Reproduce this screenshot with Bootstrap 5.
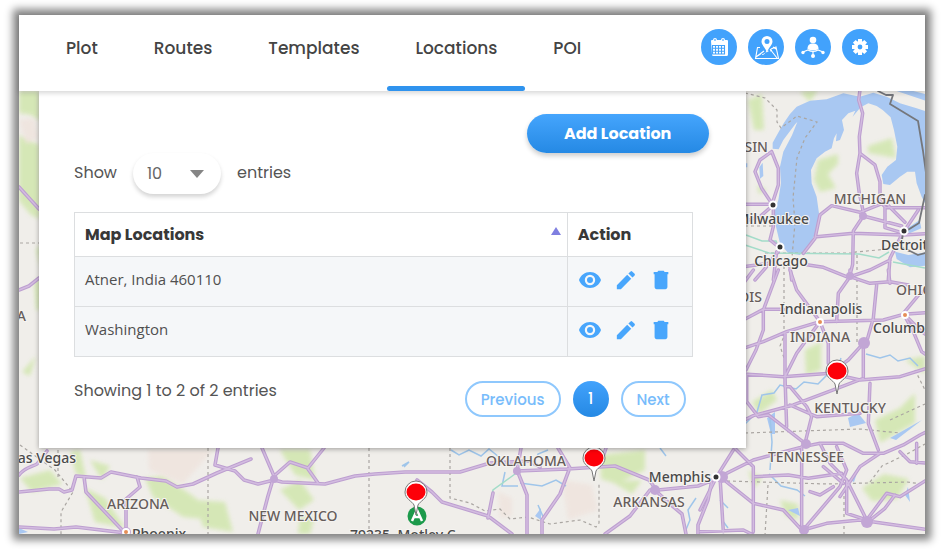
<!DOCTYPE html>
<html lang="en">
<head>
<meta charset="utf-8">
<meta name="viewport" content="width=device-width, initial-scale=1">
<title>Locations</title>
<link href="https://cdn.jsdelivr.net/npm/bootstrap@5.3.0/dist/css/bootstrap.min.css" rel="stylesheet">
<style>
:root { --ui: Poppins, Inter, "Open Sans", sans-serif; --blue: #42a2fc; }
body { font-family: var(--ui); font-size: 15px; color: #444; background: #fff; padding: 15px 19px; }
.app-window { background: #fff; box-shadow: 0 0 8px 6px #858585; }
.top-bar { z-index: 2; min-height: 76px; padding: 0 47px 0 19px; box-shadow: 0 2px 5px rgba(0,0,0,.17); }
.tabs .nav-link { position: relative; height: 76px; padding: 21px 28px 0; font-size: 17px; line-height: 24px; font-weight: 500; color: #444; }
.tabs .nav-link.active::after { content: ""; position: absolute; left: 0; right: 0; bottom: 0; height: 5px; border-radius: 3px; background: #2f93ee; }
.tools { gap: 11px; padding-top: 14px; }
.tool { width: 36px; height: 36px; border: 0; padding: 0; background: var(--blue); color: #fff; border-radius: 50%; }
.map-area { isolation: isolate; }
.map-svg { inset: 0; z-index: -1; background: #f0eeea; }
.map-svg text { font-family: "Noto Sans", sans-serif; font-size: 14px; font-weight: 500; fill: #665d5b; stroke: #f6f4f1; stroke-width: 2px; paint-order: stroke; }
.map-svg .city { fill: #4a4a4a; }
.panel { width: 78%; margin-left: 20px; padding: 23px 37px 31px 35px; background: #fff; box-shadow: 0 1px 5px rgba(0,0,0,.35); }
.btn-add { width: 182px; height: 39px; border: 0; border-radius: 20px; font-size: 16px; font-weight: 700; color: #fff; background: linear-gradient(#45a5fd, #2589e4); box-shadow: 0 3px 5px rgba(0,0,0,.2); }
.length { gap: 16px; font-size: 16px; line-height: 40px; color: #555; margin-bottom: 18px; }
.picker::after { content: ""; position: absolute; right: 17px; top: 17px; border: 7px solid transparent; border-top: 8px solid #858585; border-bottom: 0; pointer-events: none; }
.picker select { appearance: none; width: 88px; height: 41px; padding: 0 14px; border: 0; border-radius: 21px; background: #fff; color: #666; font-size: 16px; box-shadow: 0 3px 4px rgba(0,0,0,.17); }
.places { border: 1px solid #dfe1e2; margin-bottom: 24px; }
.places th, .places td { border: 1px solid #dcdee0; padding: 0 10px; box-shadow: none; vertical-align: middle; }
.places th { height: 44px; font-size: 16px; font-weight: 700; color: #383838; }
.places td { height: 50px; padding-bottom: 4px; background: #f5f7f9; font-family: "Open Sans", sans-serif; font-size: 15px; color: #505050; }
.sort { border: 5px solid transparent; border-bottom: 8px solid #7f7fe0; border-top: 0; margin: 0 -4px 8px 0; }
.col-act { width: 125px; }
.acts { gap: 13px; }
.acts button { border: 0; padding: 0; background: none; color: #48a6fc; line-height: 1; }
.status { font-size: 16px; line-height: 20px; color: #555; }
.pager { gap: 13px; padding-right: 7px; }
.pager .page-item .page-link { height: 36px; padding: 0 14px; border: 2px solid #8fc8fd; border-radius: 18px; line-height: 33px; font-size: 15px; font-weight: 500; color: #78bcfb; }
.pager .page-item.active .page-link { width: 36px; padding: 0; border: 0; line-height: 35px; text-align: center; color: #fff; background: linear-gradient(#42a2fc, #2589e4); }
</style>
<script src="https://cdn.jsdelivr.net/npm/bootstrap@5.3.0/dist/js/bootstrap.bundle.min.js"></script>
</head>
<body class="min-vh-100 d-flex flex-column">
<div class="app-window flex-grow-1 d-flex flex-column">
  <header class="top-bar bg-white position-relative d-flex justify-content-between align-items-start">
    <nav class="nav tabs flex-nowrap" aria-label="Main">
      <a class="nav-link" href="#plot">Plot</a>
      <a class="nav-link" href="#routes">Routes</a>
      <a class="nav-link" href="#templates">Templates</a>
      <a class="nav-link active" aria-current="page" href="#locations">Locations</a>
      <a class="nav-link" href="#poi">POI</a>
    </nav>
    <div class="tools d-flex">
      <button class="tool" type="button" aria-label="Calendar"><svg width="36" height="36" viewBox="0 0 36 36"><path fill="currentColor" d="M10 12q0-1 1-1h1q0-2 2-2t2 2h4q0-2 2-2t2 2h2q1 0 1 1v13.500q0 1.500-1.500 1.500h-13q-1.500 0-1.500-1.500z"/><path stroke="#42a2fc" stroke-width="1.100" fill="none" d="M11.500 16.500h12v8.500h-12zM11.500 19.300h12M11.500 22.200h12M14.500 16.500v8.500M17.500 16.500v8.500M20.500 16.500v8.500M14 10v2M22 10v2"/></svg></button>
      <button class="tool" type="button" aria-label="Map"><svg width="36" height="36" viewBox="0 0 36 36" fill="none" stroke="#fff"><path d="M12 18.500H9.500L7.500 29.500h23L28 18l-5 2M25 18l3 2M8 28l8-6M22 20l7 9" stroke-width="1.100"/><path d="M10 27c2-3 5 0 7-3s5-1 7-3" stroke-dasharray="3 1.500"/><path fill="#fff" stroke="none" fill-rule="evenodd" d="M19 7a5.500 5.500 0 0 1 5.500 5.500c0 3.500-4 6-5.500 11-1.500-5-5.500-7.500-5.500-11A5.500 5.500 0 0 1 19 7zm0 3a2.500 2.500 0 1 0 0 5 2.500 2.500 0 0 0 0-5z"/></svg></button>
      <button class="tool" type="button" aria-label="Drivers"><svg width="36" height="36" viewBox="0 0 36 36" fill="#fff"><circle cx="18" cy="11" r="3.300"/><path d="M12.500 20c0-4 2-5.500 5.500-5.500s5.500 1.500 5.500 5.500q-5.500 3-11 0z"/><path fill="none" stroke="#fff" stroke-width="1.200" d="M8 23l5-2q5 3 10 0l5 2M18 22v4"/><circle cx="8" cy="23.500" r="1.700"/><circle cx="28" cy="23.500" r="1.700"/><circle cx="18" cy="27" r="2"/></svg></button>
      <button class="tool" type="button" aria-label="Settings"><svg width="36" height="36" viewBox="0 0 36 36"><circle cx="18" cy="18" r="4.200" fill="none" stroke="#fff" stroke-width="3.600"/><g stroke="#fff" stroke-width="4"><path d="M18 10v3M18 23v3M10 18h3M23 18h3M12.300 12.300l2.200 2.200M21.500 21.500l2.200 2.200M12.300 23.700l2.200-2.200M21.500 14.500l2.200-2.200"/></g></svg></button>
    </div>
  </header>

  <main class="map-area position-relative flex-grow-1 overflow-hidden">
    <svg class="map-svg position-absolute w-100 h-100" viewBox="19 91 906 443" preserveAspectRatio="xMidYMid slice" role="img" aria-label="Map of the central United States">
      <defs>
        <filter id="soft" x="-20%" y="-20%" width="140%" height="140%"><feGaussianBlur stdDeviation="2"/></filter>
        <g id="pin"><path d="M-2 13C-4 9-11 7-11 0a11 11 0 0 1 22 0c0 7-7 9-9 13L0 23z" fill="#fff" stroke="#777"/><ellipse rx="9.500" ry="8.500" fill="#fd0009"/></g>
        <!-- roads of the Great Lakes, units of a third of a pixel -->
        <path id="roadsNorth" d="M480 30l-4 30 12 40-10 70 2 50-10 60 8 60 15 70M480 220l45 35 15 50 0 60 15 15M215 215l-35 25-15 35 20 50 32 48M215 215l20 50 0 50-18 55M130 373h90M130 425l50-15 40-35M220 390v50l-10 40 25 20M310 520l35-45 15-70 35-28 85 20 75-30 60 60M350 470l110-10 150 5 80-5M490 408l-30 45-2 100-10 40M490 408l115 30M555 383l0 60 50 15M555 383h125M655 390l-40 60M570 540l-60 30-65 22-75-30-50-8M570 535l-5 65M610 455l-20 40-20 40M130 560l75-10 30-35M230 515l-10 85M200 560l-35 40M270 560l5 40"/>
        <path id="roadsSouth" d="M235 0l-30 80-15 40 0 60-22 60-30 60M160 0l-30 40M130 150l60-32h60M270 0l20 60 70 95 190-5 60-17 70-5M360 155l-100 30-70 30-60 20M360 155l25 65 0 60 30 45M360 155l-70 95-35 70 5 150M450 0v20l-35 50-5 85M450 20l60 20 60-5 55 10M565 0l5 40M530 45l-10 100-20 70M610 130l50-60 20-10M610 130l55 55 15 10M610 130l30 55 25 60 15 10M490 220l-45 50-35 25M490 220l0 100M130 312l120 8 140-10 90 20 120-10 80-25M490 325l-90 35-120 45-120 32-30 15M510 340l-5 120 30 80M140 315l0 80 35 45 30-5 110 85M255 190l0 160 15 0 50 60 15 30-20 80M270 405l80 35 130-10M60 620l100-50 150-40 50-10 70 0 60 30 60 0 60-25 50-30 60-30M60 620l100 80 90 20 60 65M60 620l10 165M100 530l60 60 0 80 0 115M165 620l100-5 60 10 100-15M305 530l0 250M0 785l130-5 30 15M310 780l70-20 100-10 210 30M310 780l110-130 20-50-30-70M360 520l30 60 50 50 60 120M540 550l-60 40-60 90M440 630l0 100 60 20 60-80 40 10 80-50M600 545l30 30 60 5M650 520l0 60M370 590l60 50M0 720l50-100 50-80M330 665l30 10 40-25M505 755l50-40 30-40"/>
        <!-- roads of the south-west and the plains, page units -->
        <path id="roadsWest" d="M19 187l20 22M19 290l10-4 10-8M19 475c5-7 12-8 18-11l10-13M19 492l30-3 10 0 5 3 8-2 4-14 25 2 10-6 30 6 25 3 11 6 16-3 24-11 34-14M84 477l2 15 38 40M137 477l3 10-14 12 0 33M19 527l35 2 22-2 50 6M218 448l-3 17 20 6 9 9 14 4 16-4 8 2 43 2 30-8 20-2 30-2 55 0 30-9 40-2 10 6M262 448l12 28-6 20-10 38M274 476l16-14 18 6 16-20M308 469l10 14M417 480l15 12 10 10 46 14 24 18M488 518l5-25M517 470l10 25 0 39M521 448l-4 23 50-2 48-3 34 14 6 8M569 470l-9 24-18 26 0 14M605 534l25-18 20-26 8 0 40-4 20-8M655 490l15 14 12 10 4 20M712 480l-4 20-10 25 0 9M558 448l12 20M606 448l-6 18"/>
      </defs>
      <g fill="#d3e7b1" filter="url(#soft)" opacity=".9">
        <path d="M19 91h20v30l-8 -6-12-2zM19 135l20 10v74l-8-4-12-14zM36 250l4-6v24zM22 372l14-16-6 20zM34 280h6v30h-4z"/>
        <path d="M748 100l14-6 2 36-10 0zM800 92l18-2-8 12zM818 160l20-6 0 10-10 10 8 14-16 4-6-12zM868 146l24-8 4 20-28-5zM757 185l10 5-8 4z"/>
        <path d="M805 350l16-8 0 28-15 5zM752 402l20-12 5 10-18 14zM875 420l25-12 15-15 0 30-35 20zM905 360l20-4v18zM862 488l22-14 25 5-12 20-25 2zM780 500l18 4 0 16-12-4zM748 470l14 8-8 10z"/>
        <path d="M20 478l30-8 12 14-30 8zM70 452l10-2 6 28-10-4zM90 460l20 6-8 14zM145 478l18-2 30 20 30 25-40-4-30-20zM195 500l30 2 8 30-30-5zM280 490l20-10 14 20-15 10zM280 450l30 0 5 30-20-5zM300 515l14 4-4 15h-12zM85 488l20 10 20 30-30-6zM600 455l45-5 0 20-28 14-16-5zM612 482l30-2-10 14z"/>
      </g>
      <g fill="#efe3dd" filter="url(#soft)" opacity=".8"><path d="M148 450h65l-30 34-34-14zM498 492l14 6 0 18-12 2zM562 480l30 5 6 25-30 10zM19 120l15-2 4 20-12 6z"/></g>
      <g transform="translate(700 80) scale(.3333)" fill="#a9c8f2">
        <path d="M380 58L330 62 290 80 270 102 252 128 238 152 218 188 218 206 236 208 250 180 286 132 292 126 276 166 250 215 240 260 243 310 235 360 222 400 228 440 240 490 265 520 300 525 330 495 350 450 357 400 350 350 335 310 333 270 350 235 375 215 395 205 402 175 410 160 408 184 420 180 432 150 426 120 445 100 466 92 458 110 482 82 505 70 530 78 548 90 572 112 582 150 592 200 588 240 562 260 545 285 550 312 570 315 600 290 622 275 645 275 650 310 665 350 680 380 680 95 650 85 600 70 560 50 520 38 480 50 430 40z"/>
        <path d="M130 250l12 0 0 12-12 0zM178 262l10-14 2 40-10 8zM590 33l90 30v-20l-40-10zM614 450l45-30 5 25-35 15zM585 515l40 10 55-8v40l-50 5-40-25z"/>
      </g>
      <g fill="#a9c8f2"><path d="M848 418l10-5 8 10-16 4zM767 418l8-6 0 22-4 0zM890 438l32-18-26 20zM850 480l10-16-6 18zM788 510l10-2 2 8zM905 495l3-8 2 15zM19 528l9 4-9 2zM535 516l6-8 0 12z"/></g>
      <g fill="none" stroke="#9fc5ea" stroke-width="1.500">
        <path d="M745 424l12-12 5-17 12-2 6-8 16 4 8-7 14 2 10-10 8-2 5-14M866 354l14 4 10-3 8 6 12-3 8 8M769 474l12 12 16 4 8 6M720 500l8 8M722 520l6 8M770 418l2 24-2 28M451 450l8 5 10-5 12 6 8-7 10 8M505 472l-3 14 16 0M548 450l-10 4-4 12M520 483l22 3 14-6 10 6M538 505l6 14M590 452l-6 6M660 448l6 8M402 466l7-4-5 5M696 498l-8 12 2 10-5 12"/>
      </g>
      <g fill="none" stroke="#aaa6a2" stroke-width="1.200" stroke-dasharray="3 3">
        <path d="M745 93l20 5 12 12 0 12 4 6 16-12 20 6-12 16-8 20-4 40 2 25-3 34M784 266v70l-4 10 4 12M765 253h90v-1l34-3M857 255v90M745 226h30M745 433l115-4 40 4M727 481l100 3 80-2 15 2M768 485l-3 50M844 490v44M890 420l35-16M915 370l10 20M20 243h20M208 448v86M369 448v86M450 448v50l20 5 15 8 15-2 10 10 18-2 22 7 30-4 16 7 3-4V482M20 445l35 25 18 22-12 20v22M58 450v30M870 482l12-16 25-12 18-10"/>
      </g>
      <g fill="none" stroke="#a3dcc9" stroke-width="1.500"><path d="M746 235l16 6 14 0 4 10M745 245l24 8 90 1 20 4 10-6M893 262l32 6M515 474l-22 16-4 22"/></g>
      <g fill="none" stroke-linejoin="round" stroke-linecap="round">
        <g stroke="#bd9fd0" stroke-width="3.600">
          <use href="#roadsWest"/>
          <g stroke-width="10.500"><use href="#roadsNorth" transform="translate(700 80) scale(.3333)"/><use href="#roadsSouth" transform="translate(700 270) scale(.3333)"/></g>
        </g>
        <g stroke="#d3bce0" stroke-width="1.500">
          <use href="#roadsWest"/>
          <g stroke-width="4"><use href="#roadsNorth" transform="translate(700 80) scale(.3333)"/><use href="#roadsSouth" transform="translate(700 270) scale(.3333)"/></g>
        </g>
        <path stroke="#75777c" stroke-width="1.800" d="M878 91l8 4 7 0-3 9 28 17 5 30 3 22M925 195l-6 28-16 10-2 14 8 4M908 250l10 5 7-2"/>
      </g>
      <g fill="#c2a6d5"><circle cx="864" cy="343" r="6"/><circle cx="806" cy="444" r="5"/><circle cx="867" cy="522" r="6"/><circle cx="804" cy="530" r="5"/><circle cx="863" cy="216" r="4"/><circle cx="850" cy="276" r="4"/><circle cx="655" cy="490" r="5"/><circle cx="517" cy="471" r="4"/><circle cx="274" cy="479" r="4"/><circle cx="722" cy="477" r="6"/><circle cx="126" cy="532" r="5"/></g>
      <g fill="#333" stroke="#fff" stroke-width="2"><circle cx="773" cy="205" r="3.500"/><circle cx="780" cy="247" r="3.500"/><circle cx="904" cy="231" r="3.500"/><circle cx="716" cy="477" r="3.500"/></g>
      <g fill="#e58e56" stroke="#fff" stroke-width="2"><circle cx="820" cy="322" r="3"/><circle cx="905" cy="315" r="3"/><circle cx="126" cy="532" r="3"/></g>
      <g>
        <text x="768" y="152" text-anchor="end">SIN</text>
        <text x="870" y="204" text-anchor="middle">MICHIGAN</text>
        <text x="762" y="302" text-anchor="end">OIS</text>
        <text x="820" y="342" text-anchor="middle">INDIANA</text>
        <text x="896" y="295">OHIO</text>
        <text x="850" y="413" text-anchor="middle">KENTUCKY</text>
        <text x="806" y="462" text-anchor="middle">TENNESSEE</text>
        <text x="526" y="466" text-anchor="middle">OKLAHOMA</text>
        <text x="649" y="507" text-anchor="middle">ARKANSAS</text>
        <text x="138" y="509" text-anchor="middle">ARIZONA</text>
        <text x="293" y="521" text-anchor="middle">NEW MEXICO</text>
        <text x="26" y="321" text-anchor="end">A</text>
      </g>
      <g>
        <text class="city" x="809" y="224" text-anchor="end">Milwaukee</text>
        <text class="city" x="781" y="266" text-anchor="middle">Chicago</text>
        <text class="city" x="881" y="250">Detroit</text>
        <text class="city" x="821" y="314" text-anchor="middle">Indianapolis</text>
        <text class="city" x="873" y="333">Columb</text>
        <text class="city" x="711" y="482" text-anchor="end">Memphis</text>
        <text class="city" x="76" y="463" text-anchor="end">as Vegas</text>
        <text class="city" x="132" y="539">Phoenix</text>
        <text class="city" x="350" y="540">79235, Motley C</text>
      </g>
      <circle cx="417" cy="516" r="9.500" fill="#1c9a4b"/>
      <path d="M412 521l5-11 5 11M414 517h6" fill="none" stroke="#fff" stroke-width="2.500"/>
      <use href="#pin" x="416" y="492"/><use href="#pin" x="594" y="458"/><use href="#pin" x="837" y="371"/>
    </svg>

    <section class="panel" aria-label="Locations">
      <div class="d-flex justify-content-end"><button class="btn btn-add p-0" type="button">Add Location</button></div>
      <div class="length d-flex">
        <label for="entries">Show</label>
        <div class="picker position-relative d-flex"><select id="entries"><option>10</option><option>25</option><option>50</option></select></div>
        <span>entries</span>
      </div>
      <div class="me-3">
        <table class="table places">
          <thead><tr><th scope="col"><div class="d-flex justify-content-between align-items-center">Map Locations<i class="sort"></i></div></th><th scope="col" class="col-act">Action</th></tr></thead>
          <tbody>
            <tr><td>Atner, India 460110</td><td><div class="acts d-flex align-items-center">
              <button type="button" aria-label="View"><svg width="24" height="24" viewBox="0 0 24 24" fill="currentColor"><path id="eye" fill-rule="evenodd" d="M12 4C7 4 2.700 7.100 1 12c1.700 4.900 6 8 11 8s9.300-3.100 11-8c-1.700-4.900-6-8-11-8zm0 13.200a5.200 5.200 0 1 1 0-10.400 5.200 5.200 0 0 1 0 10.400zM12 9a3 3 0 1 0 0 6 3 3 0 0 0 0-6z"/></svg></button>
              <button type="button" aria-label="Edit"><svg width="22" height="22" viewBox="0 0 24 24" fill="currentColor"><path id="pencil" d="M2 17.600V22h4.400L17.700 10.600l-4.400-4.400zM21.400 7a1.300 1.300 0 0 0 0-1.700l-2.700-2.700a1.300 1.300 0 0 0-1.700 0l-2.400 2.300L19.100 9.300z"/></svg></button>
              <button type="button" aria-label="Delete"><svg width="22" height="22" viewBox="0 0 24 24" fill="currentColor"><path id="bin" d="M5 19.700C5 21 6 22 7.200 22h9.600c1.200 0 2.200-1 2.200-2.300V5.500H5zM20 3.300h-4L15 2H9L8 3.300H4V5.700h16z"/></svg></button>
            </div></td></tr>
            <tr><td>Washington</td><td><div class="acts d-flex align-items-center">
              <button type="button" aria-label="View"><svg width="24" height="24" viewBox="0 0 24 24" fill="currentColor"><use href="#eye"/></svg></button>
              <button type="button" aria-label="Edit"><svg width="22" height="22" viewBox="0 0 24 24" fill="currentColor"><use href="#pencil"/></svg></button>
              <button type="button" aria-label="Delete"><svg width="22" height="22" viewBox="0 0 24 24" fill="currentColor"><use href="#bin"/></svg></button>
            </div></td></tr>
          </tbody>
        </table>
        <div class="d-flex justify-content-between">
          <div class="status">Showing 1 to 2 of 2 entries</div>
          <ul class="pagination pager mb-0">
            <li class="page-item"><a class="page-link" href="#prev">Previous</a></li>
            <li class="page-item active"><a class="page-link" href="#1" aria-current="page">1</a></li>
            <li class="page-item"><a class="page-link" href="#next">Next</a></li>
          </ul>
        </div>
      </div>
    </section>
  </main>
</div>
</body>
</html>
